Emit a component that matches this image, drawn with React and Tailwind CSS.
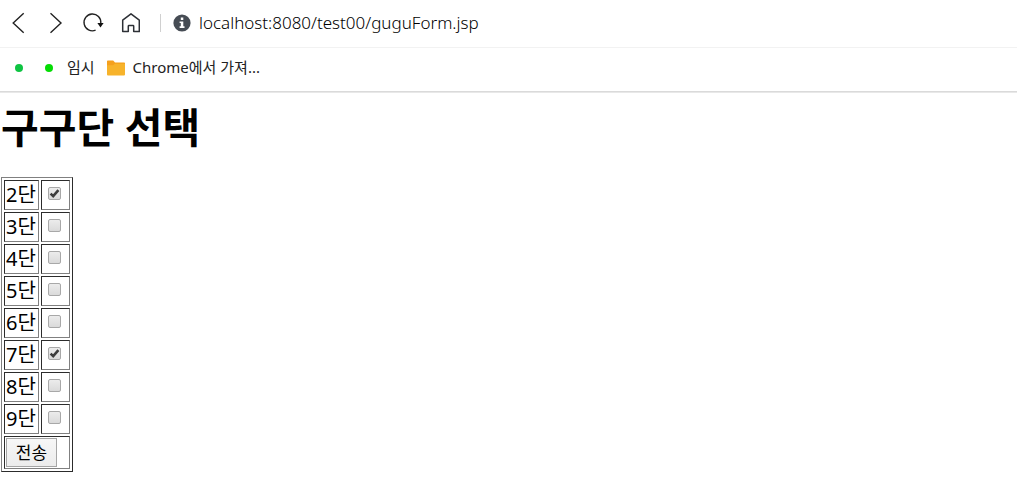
import React, { useState } from "react";

const dans = [2, 3, 4, 5, 6, 7, 8, 9];

const cellStyle =
  "border border-t-[#2c2c2c] border-l-[#2c2c2c] border-r-[#808080] border-b-[#808080]";

function AddressBar() {
  return (
    <div className="flex h-12 items-center border-b border-[#f2f2f2] pb-0.5 pl-2">
      {/* navigation */}
      <nav className="flex items-center gap-4">
        <button type="button" aria-label="뒤로" className="h-6 w-5">
          <svg viewBox="0 0 20 24" className="h-6 w-5" fill="none" stroke="#222" strokeWidth="1.4">
            <path d="M15.7 2.2L5.2 12l10.5 9.8" />
          </svg>
        </button>
        <button type="button" aria-label="앞으로" className="h-6 w-5">
          <svg viewBox="0 0 20 24" className="h-6 w-5" fill="none" stroke="#222" strokeWidth="1.4">
            <path d="M6.5 2.2L17 12 6.5 21.8" />
          </svg>
        </button>
        <button type="button" aria-label="새로고침" className="h-6 w-6">
          <svg viewBox="0 0 24 24" className="h-6 w-6" fill="none" stroke="#222" strokeWidth="1.4">
            <path d="M15.6 19.2A8.4 8.4 0 1 1 20.8 12.2" />
            <path d="M17.4 12h6.2l-3.1 4.6z" fill="#111" stroke="none" />
          </svg>
        </button>
        <button type="button" aria-label="홈" className="h-6 w-5">
          <svg viewBox="0 0 20 24" className="h-6 w-5" fill="none" stroke="#2d3036" strokeWidth="1.5">
            <path
              strokeLinejoin="round"
              d="M2.7 9.2L11 2.8l8.3 6.4v11.4h-5.6v-5.4q0-.7-.7-.7H9q-.7 0-.7.7v5.4H2.7z"
            />
          </svg>
        </button>
      </nav>

      {/* url */}
      <div className="ml-5 flex items-center border-l border-[#d0d0d0] pl-3">
        <svg viewBox="0 0 18 18" className="h-[18px] w-[18px]">
          <circle cx="9" cy="9" r="8.6" fill="#464c54" />
          <path d="M7.8 3.6h2.5v2.4H7.8zM6.6 7.4h3.7v4.8h1.2v1.7H6.6v-1.7h1.2V9.1H6.6z" fill="#fff" />
        </svg>
      </div>
      <input
        type="text"
        aria-label="주소"
        defaultValue="localhost:8080/test00/guguForm.jsp"
        className="ml-2 h-8 min-w-0 flex-1 text-[17px] font-light text-black outline-none"
      />
    </div>
  );
}

function BookmarkBar() {
  return (
    <div className="h-[45px] border-b border-[#e8e8e8]">
      <div className="flex h-11 items-center border-b border-[#dadada] pb-1 pl-[15px] text-[15px] text-[#222]">
        <a href="#" aria-label="북마크 1" className="h-2 w-2 rounded-full bg-[#0fc443]" />
        <a href="#" aria-label="북마크 2" className="ml-[22px] h-2 w-2 rounded-full bg-[#05dc05]" />
        <a href="#" className="ml-3.5">
          임시
        </a>
        <a href="#" className="ml-3 flex items-center gap-2">
          <svg viewBox="0 0 18 16" className="h-4 w-[18px]">
            <path d="M0 1.2Q0 .4.8.4h5.4l1.8 2h9.2q.8 0 .8.8V8H0z" fill="#f5a01d" />
            <path d="M0 5.2h6.2l1.6-1.4H18v10.8q0 1-1 1H1q-1 0-1-1z" fill="#f7b32b" />
          </svg>
          Chrome에서 가져...
        </a>
      </div>
    </div>
  );
}

function DanCheckbox({ dan, checked, onChange }) {
  return (
    <span className="grid h-[13px] w-[13px]">
      <input
        id={`dan${dan}`}
        name="dan"
        type="checkbox"
        value={dan}
        checked={checked}
        onChange={onChange}
        className="col-start-1 row-start-1 h-[13px] w-[13px] appearance-none rounded-[2px] border border-[#a8a8a8] bg-linear-to-b from-[#ececec] to-[#dadada]"
      />
      {checked && (
        <svg
          viewBox="0 0 13 13"
          className="pointer-events-none col-start-1 row-start-1 h-[13px] w-[13px]"
          fill="none"
          stroke="#3c3c3c"
          strokeWidth="2.6"
        >
          <path d="M2.6 6.6l2.6 2.5 5.2-5.9" />
        </svg>
      )}
    </span>
  );
}

export default function App() {
  const [selected, setSelected] = useState([2, 7]);

  const handleToggle = (dan) => {
    setSelected((prev) =>
      prev.includes(dan) ? prev.filter((d) => d !== dan) : [...prev, dan]
    );
  };

  return (
    <div className="min-h-screen bg-white font-['Noto_Sans','Noto_Sans_CJK_KR',sans-serif] text-black">
      <header>
        <AddressBar />
        <BookmarkBar />
      </header>

      <main className="pl-px">
        <h1 className="pt-1.5 pb-0.5 text-[41px] leading-[56px] font-bold">구구단 선택</h1>

        <form className="mt-5" onSubmit={(e) => e.preventDefault()}>
          <table className="border-separate border-spacing-[2px] border border-t-[#808080] border-r-[#2c2c2c] border-b-[#2c2c2c] border-l-[#808080] text-[20px] leading-7">
            <tbody>
              {dans.map((dan) => (
                <tr key={dan}>
                  <td className={`${cellStyle} w-[35px] px-px whitespace-nowrap`}>
                    <label htmlFor={`dan${dan}`} className="block h-7">
                      {dan}단
                    </label>
                  </td>
                  <td className={`${cellStyle} w-[29px] pr-2 pb-1 pl-1.5`}>
                    <DanCheckbox
                      dan={dan}
                      checked={selected.includes(dan)}
                      onChange={() => handleToggle(dan)}
                    />
                  </td>
                </tr>
              ))}
              <tr>
                <td colSpan={2} className={`${cellStyle} p-px`}>
                  <button
                    type="submit"
                    className="block h-[29px] w-[51px] border border-[#a6a6a6] bg-linear-to-b from-[#f7f7f7] to-[#ececec] text-[17px] leading-6"
                  >
                    전송
                  </button>
                </td>
              </tr>
            </tbody>
          </table>
        </form>
      </main>
    </div>
  );
}
